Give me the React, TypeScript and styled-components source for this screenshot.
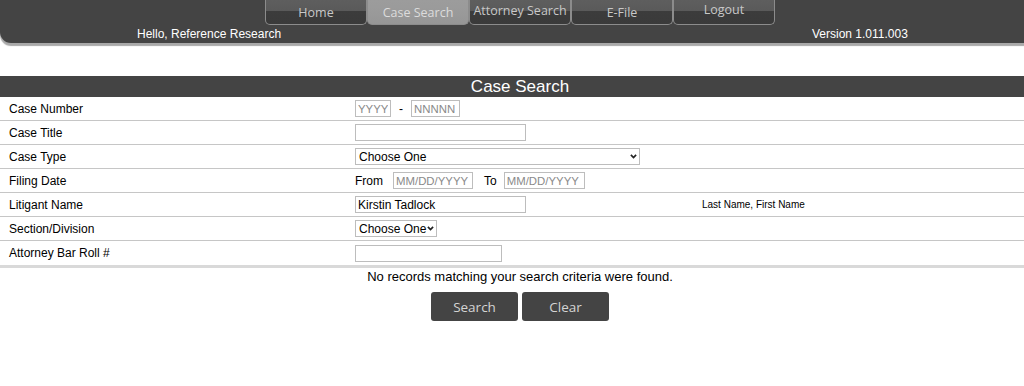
import React from "react";
import styled, { createGlobalStyle } from "styled-components";

const Global = createGlobalStyle`
  html, body { margin: 0; padding: 0; overflow: hidden; background: #fff; }
  body { font-family: "Liberation Sans", Arial, sans-serif; font-size: 12px; color: #000; }
  #root { width: 1040px; }
`;

const Page = styled.div`
  width: 1040px;
  display: flex;
  flex-direction: column;
`;

const Header = styled.header`
  height: 43px;
  background: #444;
  border-bottom-left-radius: 11px;
  box-shadow: 0 3px 1px #a9a9a9;
  display: flex;
  flex-direction: column;
`;

const TabBar = styled.nav`
  display: flex;
  justify-content: center;
  height: 25px;
`;

const Tab = styled.a<{ $active?: boolean; $lift?: number }>`
  width: 102px;
  height: 25px;
  box-sizing: border-box;
  border: 1px solid #8c8c8c;
  border-top: none;
  border-radius: 0 0 5px 5px;
  background: ${(p) =>
    p.$active
      ? "linear-gradient(#9c9c9c 0%, #9a9a9a 50%, #969696 100%)"
      : "linear-gradient(#5e5e5e 0%, #5a5a5a 45%, #3c3c3c 46%, #3a3a3a 100%)"};
  color: ${(p) => (p.$active ? "#dcdcdc" : "#c8c8c8")};
  font-family: "Open Sans", "Noto Sans", sans-serif;
  font-size: 12.5px;
  display: flex;
  align-items: center;
  justify-content: center;
  padding-bottom: ${(p) => p.$lift ?? 0}px;
  text-decoration: none;
  cursor: pointer;
`;

const InfoRow = styled.div`
  display: grid;
  grid-template-columns: 347px 347px 1fr;
  height: 18px;
  align-items: center;
  color: #fff;
  font-size: 12px;
`;

const Greeting = styled.span`
  padding-left: 137px;
  white-space: nowrap;
`;

const VersionText = styled.span`
  grid-column: 3;
  padding-left: 118px;
`;

const Table = styled.div`
  margin-top: 33px;
  display: grid;
  grid-template-columns: 347px 347px 1fr;
`;

const TitleBar = styled.div`
  grid-column: 1 / -1;
  height: 21px;
  background: #444;
  color: #fff;
  font-size: 17px;
  display: flex;
  align-items: center;
  justify-content: center;
`;

const Cell = styled.div<{ $last?: boolean; $small?: boolean }>`
  height: ${(p) => (p.$last ? 27 : 24)}px;
  box-sizing: border-box;
  border-bottom: ${(p) => (p.$last ? "3px solid #d9d9d9" : "1px solid #c6c6c6")};
  padding-left: 8px;
  display: flex;
  align-items: center;
  font-size: ${(p) => (p.$small ? 10 : 12)}px;
  color: #000;
  white-space: nowrap;
`;

const LabelCell = styled(Cell)`
  padding-left: 9px;
`;

const TextBox = styled.input<{ $w: number }>`
  width: ${(p) => p.$w}px;
  height: 17px;
  box-sizing: border-box;
  border: 1px solid #bdbdbd;
  padding: 0 2px;
  font-family: "Liberation Sans", Arial, sans-serif;
  font-size: 12px;
  color: #000;
  outline: none;
  &::placeholder { color: #8a8a8a; font-size: 11.4px; }
`;

const SelectWrap = styled.span`
  position: relative;
  display: inline-flex;
`;

const Select = styled.select<{ $w: number }>`
  appearance: none;
  width: ${(p) => p.$w}px;
  height: 17px;
  box-sizing: border-box;
  border: 1px solid #bdbdbd;
  border-radius: 0;
  padding: 0 0 0 3px;
  font-family: "Liberation Sans", Arial, sans-serif;
  font-size: 12px;
  color: #000;
  background: #fff;
  outline: none;
`;

const Chevron = styled.svg`
  position: absolute;
  right: 3px;
  top: 6px;
  width: 7px;
  height: 5px;
  pointer-events: none;
`;

const Sep = styled.span<{ $l: number; $r: number }>`
  margin: 0 ${(p) => p.$r}px 0 ${(p) => p.$l}px;
`;

const Message = styled.div`
  text-align: center;
  font-size: 13px;
  height: 18px;
  line-height: 18px;
`;

const ButtonRow = styled.div`
  display: flex;
  justify-content: center;
  gap: 4px;
  margin-top: 6px;
`;

const Button = styled.button`
  width: 87px;
  height: 29px;
  border: none;
  border-radius: 3px;
  background: #444;
  color: #d4d4d4;
  font-family: "Open Sans", "Noto Sans", sans-serif;
  font-size: 13.5px;
  cursor: pointer;
`;

function Dropdown({ w }: { w: number }) {
  return (
    <SelectWrap>
      <Select $w={w} defaultValue="">
        <option value="">Choose One</option>
      </Select>
      <Chevron viewBox="0 0 7 5">
        <path d="M0.9 0.9 L3.5 3.5 L6.1 0.9" fill="none" stroke="#222" strokeWidth="1.7" />
      </Chevron>
    </SelectWrap>
  );
}

const rows: { label: string; field: React.ReactNode; hint?: string }[] = [
  {
    label: "Case Number",
    field: (
      <>
        <TextBox $w={36} placeholder="YYYY" />
        <Sep $l={8} $r={8}>-</Sep>
        <TextBox $w={49} placeholder="NNNNN" />
      </>
    ),
  },
  { label: "Case Title", field: <TextBox $w={171} /> },
  { label: "Case Type", field: <Dropdown w={285} /> },
  {
    label: "Filing Date",
    field: (
      <>
        <Sep $l={0} $r={10}>From</Sep>
        <TextBox $w={80} placeholder="MM/DD/YYYY" />
        <Sep $l={11} $r={7}>To</Sep>
        <TextBox $w={81} placeholder="MM/DD/YYYY" />
      </>
    ),
  },
  {
    label: "Litigant Name",
    field: <TextBox $w={171} defaultValue="Kirstin Tadlock" />,
    hint: "Last Name, First Name",
  },
  { label: "Section/Division", field: <Dropdown w={82} /> },
  { label: "Attorney Bar Roll #", field: <TextBox $w={147} /> },
];

const tabs = [
  { name: "Home", lift: 0 },
  { name: "Case Search", active: true, lift: 0 },
  { name: "Attorney Search", lift: 4 },
  { name: "E-File", lift: 0 },
  { name: "Logout", lift: 6 },
];

export default function App() {
  return (
    <Page>
      <Global />
      <Header>
        <TabBar>
          {tabs.map((t) => (
            <Tab key={t.name} $active={t.active} $lift={t.lift}>
              {t.name}
            </Tab>
          ))}
        </TabBar>
        <InfoRow>
          <Greeting>Hello, Reference Research</Greeting>
          <VersionText>Version 1.011.003</VersionText>
        </InfoRow>
      </Header>
      <Table>
        <TitleBar>Case Search</TitleBar>
        {rows.map((r, i) => {
          const last = i === rows.length - 1;
          return (
            <React.Fragment key={r.label}>
              <LabelCell $last={last}>{r.label}</LabelCell>
              <Cell $last={last}>{r.field}</Cell>
              <Cell $last={last} $small>
                {r.hint}
              </Cell>
            </React.Fragment>
          );
        })}
      </Table>
      <Message>No records matching your search criteria were found.</Message>
      <ButtonRow>
        <Button>Search</Button>
        <Button>Clear</Button>
      </ButtonRow>
    </Page>
  );
}
